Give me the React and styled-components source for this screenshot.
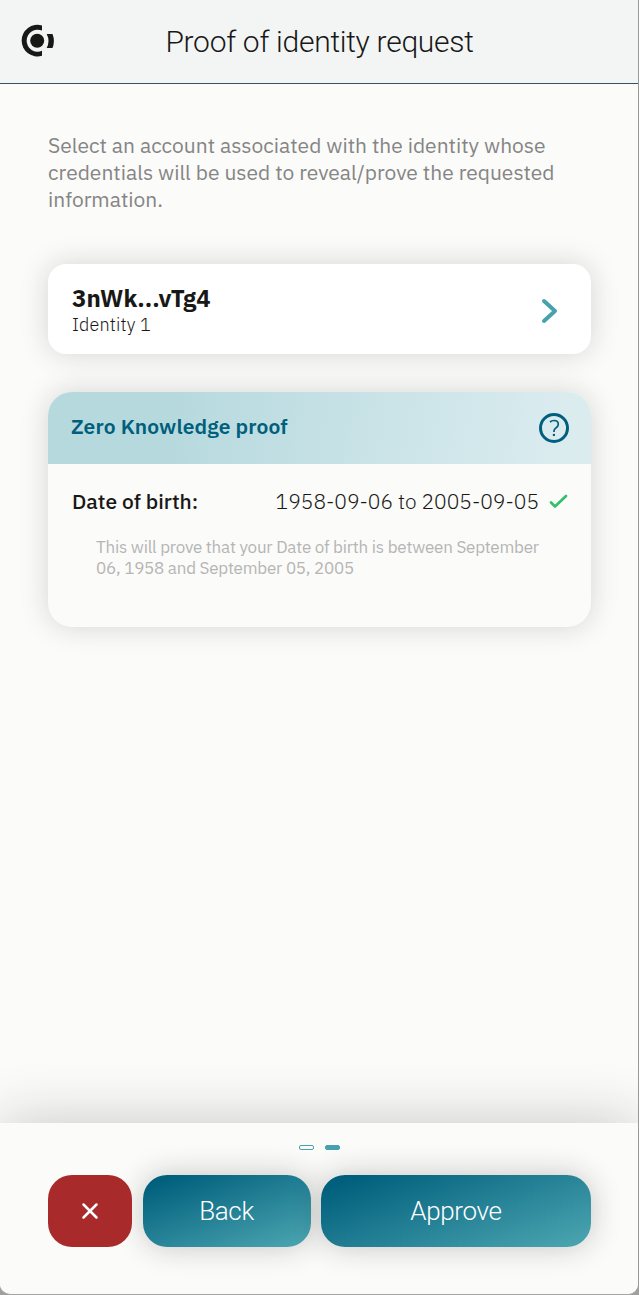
import React from "react";
import styled, { createGlobalStyle } from "styled-components";

const GlobalStyle = createGlobalStyle`
  *, *::before, *::after { box-sizing: border-box; }
  html, body { margin: 0; padding: 0; background: #a0a0a0; }
  p, h1, h2, dl, dt, dd { margin: 0; }
`;

const plex = `"IBM Plex Sans", Roboto, "Noto Sans", sans-serif`;
const roboto = `Roboto, "Open Sans", sans-serif`;

const Window = styled.div`
  display: flex;
  flex-direction: column;
  width: 639px;
  height: 1295px;
  overflow: hidden;
  background: #fbfbf9;
  border-right: 1px solid #999;
  border-bottom: 1px solid #a5a5a5;
  border-radius: 0 0 11px 11px;
  color: #181817;
  font-family: ${plex};
`;

const Header = styled.header`
  display: grid;
  grid-template-columns: 54px 1fr 53px;
  align-items: center;
  flex: none;
  height: 84px;
  padding-bottom: 1px;
  background: #f3f5f5;
  border-bottom: 1px solid #2f5568;
`;

const Logo = styled.svg`
  display: block;
  width: 35px;
  height: 34px;
  margin-left: 20px;
`;

const Title = styled.h1`
  padding-top: 2px;
  color: #181817;
  font: 300 30px/36px ${roboto};
  letter-spacing: -0.28px;
  text-align: center;
  white-space: nowrap;
`;

const Main = styled.main`
  flex: 1;
  padding: 48px 47px 0 48px;
`;

const Intro = styled.p`
  color: #858585;
  font-size: 21px;
  font-weight: 400;
  line-height: 27px;
`;

const Line = styled.span`
  display: block;
  letter-spacing: ${(p) => p.$spacing || "normal"};
  white-space: nowrap;
`;

const AccountCard = styled.section`
  display: flex;
  align-items: center;
  justify-content: space-between;
  height: 90px;
  margin-top: 51px;
  padding: 3px 32px 0 24px;
  background: #fff;
  border-radius: 18px;
  box-shadow: 0 0 28px rgba(24, 24, 23, 0.17);
`;

const AccountName = styled.h2`
  padding-bottom: 1px;
  font-size: 24px;
  font-weight: 700;
  line-height: 27px;
`;

const IdentityName = styled.p`
  font-size: 18px;
  font-weight: 300;
  line-height: 24px;
`;

const Chevron = styled.svg`
  width: 18px;
  height: 26px;
`;

const ProofCard = styled.section`
  height: 235px;
  margin-top: 38px;
  overflow: hidden;
  background: #fbfbf9;
  border-radius: 24px;
  box-shadow: 0 0 28px rgba(24, 24, 23, 0.17);
`;

const ProofHeader = styled.header`
  display: flex;
  align-items: center;
  justify-content: space-between;
  height: 72px;
  padding: 0 21px 0 23px;
  background: linear-gradient(100deg, #b6d9de 22%, #dbecef 95%);
  color: #005f7c;
`;

const ProofTitle = styled.h2`
  padding-bottom: 3px;
  font-size: 21px;
  font-weight: 600;
  line-height: 27px;
`;

const HelpIcon = styled.span`
  display: grid;
  place-items: center;
  width: 32px;
  height: 32px;
  svg { display: block; }
`;

const Attribute = styled.dl`
  display: flex;
  align-items: center;
  height: 28px;
  margin: 23px 23px 0 24px;
  font-size: 21px;
  line-height: 28px;
`;

const AttributeName = styled.dt`
  font-weight: 500;
`;

const AttributeValue = styled.dd`
  display: flex;
  align-items: center;
  gap: 10px;
  margin-left: auto;
  font-weight: 300;
`;

const CheckMark = styled.svg`
  width: 19px;
  height: 16px;
  margin-top: 1px;
`;

const Explanation = styled.p`
  margin: 22px 48px 0;
  color: #b5b5b5;
  font-size: 17px;
  line-height: 21px;
`;

const Footer = styled.footer`
  flex: none;
  height: 171px;
  padding: 22px 47px 0 48px;
  background: #fbfbf9;
  box-shadow: 0 0 60px rgba(24, 24, 23, 0.23);
`;

const Steps = styled.div`
  display: flex;
  justify-content: center;
  gap: 11px;
`;

const Step = styled.span`
  width: 15px;
  height: 5px;
  border: 1px solid #48a2ae;
  border-radius: 2px;
  background: ${(p) => (p.$active ? "#48a2ae" : "transparent")};
`;

const Actions = styled.div`
  display: grid;
  grid-template-columns: 84px 168px 270px;
  justify-content: space-between;
  column-gap: 10px;
  margin-top: 25px;
`;

const Button = styled.button`
  display: grid;
  place-items: center;
  height: 72px;
  padding: 0;
  border: 0;
  border-radius: 24px;
  background: linear-gradient(160deg, #005f7c 8%, #48a2ae 94%);
  box-shadow: 0 0 30px rgba(24, 24, 23, 0.24);
  color: #fff;
  font: 300 26px/32px ${roboto};
  letter-spacing: -0.35px;
`;

const RejectButton = styled(Button)`
  position: relative;
  background: #a92a2b;
  box-shadow: none;
`;

export default function App() {
  return (
    <>
      <GlobalStyle />
      <Window>
        <Header>
          <Logo viewBox="0 0 35 34" fill="#181817" aria-label="Concordium">
            <path d="M22 1.400A16 15.800 0 1 0 22 31.800V26.800A11 11 0 1 1 22 6.600Z" />
            <circle cx="17.200" cy="16.700" r="7" />
            <path d="M26.700 10H32.500Q35.300 17 32.500 24H26.700Q30.300 17 26.700 10Z" />
          </Logo>
          <Title>Proof of identity request</Title>
        </Header>
        <Main>
          <Intro>
            <Line>Select an account associated with the identity whose</Line>
            <Line>credentials will be used to reveal/prove the requested</Line>
            <Line>information.</Line>
          </Intro>
          <AccountCard>
            <div>
              <AccountName><Line>3nWk...vTg4</Line></AccountName>
              <IdentityName><Line $spacing="0.15px">Identity 1</Line></IdentityName>
            </div>
            <Chevron viewBox="0 0 18 26" fill="none" aria-hidden="true">
              <path d="m3 3 11 10L3 23" stroke="#48a2ae" strokeWidth="4" strokeLinecap="round" strokeLinejoin="round" />
            </Chevron>
          </AccountCard>
          <ProofCard>
            <ProofHeader>
              <ProofTitle><Line $spacing="0.12px">Zero Knowledge proof</Line></ProofTitle>
              <HelpIcon>
                <svg width="32" height="32" viewBox="0 0 32 32" fill="none" stroke="#005f7c" aria-label="Help">
                  <circle cx="16" cy="16" r="13.500" strokeWidth="3" />
                  <path d="M12 10c1.100-1 2.500-1.500 4.100-1.500 2.700 0 4.200 1.400 4.200 3.700 0 3.700-4.300 3.600-4.300 6.600v1.200" strokeWidth="1.700" />
                  <circle cx="15.900" cy="22.900" r="1.200" fill="#005f7c" stroke="none" />
                </svg>
              </HelpIcon>
            </ProofHeader>
            <Attribute>
              <AttributeName><Line>Date of birth:</Line></AttributeName>
              <AttributeValue>
                <Line>1958-09-06 to 2005-09-05</Line>
                <CheckMark viewBox="0 0 19 16" fill="none" aria-hidden="true">
                  <path d="m2 8.500 4 4L17 2" stroke="#32c069" strokeWidth="2.700" strokeLinecap="round" strokeLinejoin="round" />
                </CheckMark>
              </AttributeValue>
            </Attribute>
            <Explanation>
              <Line $spacing="-0.22px">This will prove that your Date of birth is between September</Line>
              <Line $spacing="-0.22px">06, 1958 and September 05, 2005</Line>
            </Explanation>
          </ProofCard>
        </Main>
        <Footer>
          <Steps>
            <Step />
            <Step $active />
          </Steps>
          <Actions>
            <RejectButton aria-label="Reject">
              <svg width="18" height="18" viewBox="0 0 18 18" fill="none" aria-hidden="true">
                <path d="m2.500 2.500 13 13m0-13-13 13" stroke="#fff" strokeWidth="2.500" strokeLinecap="round" />
              </svg>
            </RejectButton>
            <Button>Back</Button>
            <Button>Approve</Button>
          </Actions>
        </Footer>
      </Window>
    </>
  );
}
